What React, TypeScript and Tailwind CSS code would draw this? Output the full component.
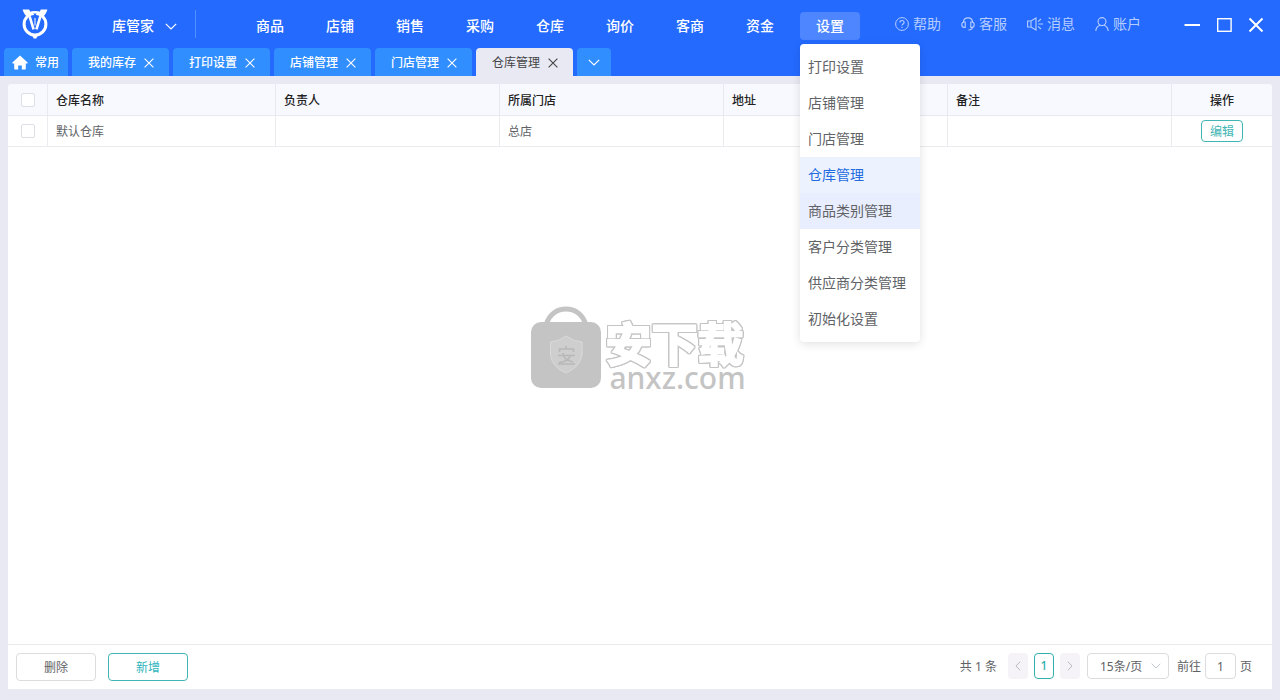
import React from "react";

const navItems = ["商品", "店铺", "销售", "采购", "仓库", "询价", "客商", "资金"];

const settingsMenu = [
  "打印设置",
  "店铺管理",
  "门店管理",
  "仓库管理",
  "商品类别管理",
  "客户分类管理",
  "供应商分类管理",
  "初始化设置",
];

const tabs = ["我的库存", "打印设置", "店铺管理", "门店管理", "仓库管理"];
const activePage = "仓库管理";
const hoveredPage = "商品类别管理";

const columns = ["仓库名称", "负责人", "所属门店", "地址", "备注"];
const rows = [["默认仓库", "", "总店", "", ""]];

function Logo() {
  return (
    <svg viewBox="0 0 26 30" className="h-[30px] w-[26px]" fill="none" stroke="#fff" aria-hidden="true">
      <circle cx="13" cy="15.2" r="10.9" strokeWidth="3" />
      <path d="M8 0L13 7L18 0Z" fill="#246aff" stroke="none" />
      <path d="M0.6 0.6H7.2L9.6 5.2L4.6 7.6C2.8 5.8 1.4 3.400 0.6 0.6Z" fill="#fff" stroke="none" />
      <path d="M25.4 0.6H18.8L16.4 5.2L21.4 7.6C23.2 5.8 24.6 3.400 25.4 0.6Z" fill="#fff" stroke="none" />
      <path d="M7 4.6Q13 2 19 4.6" strokeWidth="2.4" />
      <path d="M7.6 7.4L11.6 20.4M18.4 7.4L14.4 20.4" strokeWidth="2.6" />
      <path d="M13 9V16.500" strokeWidth="1" />
      <path d="M10 25.2H16L14.4 29.4H11.6Z" fill="#fff" stroke="none" />
    </svg>
  );
}

function Chevron({ className }: { className: string }) {
  return (
    <svg viewBox="0 0 12 7" className={className} fill="none" stroke="currentColor" strokeWidth="1.2" aria-hidden="true">
      <path d="M0.8 0.8L6 6L11.2 0.8" />
    </svg>
  );
}

function Cross() {
  return (
    <svg viewBox="0 0 10 10" className="size-[10px]" fill="none" stroke="currentColor" strokeWidth="1.1" aria-hidden="true">
      <path d="M0.6 0.6L9.4 9.4M9.4 0.6L0.6 9.4" />
    </svg>
  );
}

function HelpIcon() {
  return (
    <svg viewBox="0 0 14 14" className="size-[14px]" fill="none" stroke="currentColor" aria-hidden="true">
      <circle cx="7" cy="7" r="6.4" />
      <path d="M4.9 5.5C4.9 2.7 9.1 2.8 9.1 5.4C9.1 7 7 6.9 7 8.6M7 9.8V11" strokeWidth="1.1" />
    </svg>
  );
}

function HeadsetIcon() {
  return (
    <svg viewBox="0 0 14 14" className="size-[14px]" fill="none" stroke="currentColor" strokeWidth="1.1" aria-hidden="true">
      <path d="M2.4 5.4C2.6 -0.6 11.4 -0.6 11.6 5.4" />
      <path d="M4.2 5V10.4H3.2C0 10.4 0 5 3.2 5ZM9.8 5V10.4H10.8C14 10.4 14 5 10.8 5Z" />
      <path d="M11.6 10.4C11.2 12.4 9.800 13 7.4 13" />
    </svg>
  );
}

function SpeakerIcon() {
  return (
    <svg viewBox="0 0 16 14" className="h-[14px] w-4" fill="none" stroke="currentColor" strokeWidth="1.1" aria-hidden="true">
      <path d="M0.6 4H4L9 1V13L4 10H0.6ZM4 4V10" />
      <path d="M11 4.6L14 2M11.4 7H16M11 9.4L14 12" />
    </svg>
  );
}

function UserIcon() {
  return (
    <svg viewBox="0 0 14 14" className="size-[14px]" fill="none" stroke="currentColor" strokeWidth="1.1" aria-hidden="true">
      <circle cx="7" cy="4.6" r="4" />
      <path d="M0.8 14C1 10.6 2.6 9 5 8.2M9 8.2C11.4 9 13 10.6 13.2 14" />
    </svg>
  );
}

const utilities = [
  { label: "帮助", Icon: HelpIcon },
  { label: "客服", Icon: HeadsetIcon },
  { label: "消息", Icon: SpeakerIcon },
  { label: "账户", Icon: UserIcon },
];

function Header() {
  return (
    <header className="flex h-12 items-center pl-[22px] text-sm text-white">
      <Logo />
      <button className="ml-16 flex items-center gap-[11px] pt-1 font-medium">
        库管家
        <Chevron className="h-[7px] w-3" />
      </button>
      <span className="ml-[18px] h-7 w-px bg-[#4d90ff]" />
      <nav className="ml-11 flex gap-[10px] pt-1 font-medium">
        {navItems.map((item) => (
          <button key={item} className="h-7 w-15">
            {item}
          </button>
        ))}
        <div className="relative">
          <button className="h-7 w-15 rounded bg-[#4d86ff]" aria-expanded="true">
            设置
          </button>
          <ul className="absolute top-8 left-0 z-10 w-30 rounded bg-white py-[5px] font-normal text-[#606266] shadow-[0_2px_10px_rgba(0,0,0,0.12)]">
            {settingsMenu.map((item) => (
              <li key={item}>
                <a
                  href="#"
                  className={
                    item === activePage
                      ? "block bg-[#ecf3ff] px-2 leading-9 text-[#246ae0]"
                      : item === hoveredPage
                        ? "block bg-[#e9eeff] px-2 leading-9"
                        : "block px-2 leading-9"
                  }
                >
                  {item}
                </a>
              </li>
            ))}
          </ul>
        </div>
      </nav>
      <div className="ml-auto flex items-center gap-5 text-[#b5ceff]">
        {utilities.map(({ label, Icon }) => (
          <button key={label} className="flex items-center gap-1">
            <Icon />
            {label}
          </button>
        ))}
      </div>
      <div className="mr-4 ml-[43px] flex items-center gap-4">
        <button aria-label="最小化">
          <svg viewBox="0 0 16 16" className="size-4" stroke="#fff" strokeWidth="2">
            <path d="M0.500 9H16" />
          </svg>
        </button>
        <button aria-label="最大化">
          <svg viewBox="0 0 16 16" className="size-4" fill="none" stroke="#fff" strokeWidth="1.4">
            <rect x="1.700" y="2.700" width="13.400" height="12.600" />
          </svg>
        </button>
        <button aria-label="关闭">
          <svg viewBox="0 0 16 16" className="size-4" stroke="#fff" strokeWidth="2">
            <path d="M1.500 2.500L14.500 15.500M14.500 2.500L1.500 15.500" />
          </svg>
        </button>
      </div>
    </header>
  );
}

function TabBar() {
  return (
    <div className="flex h-7 gap-1 px-1 text-xs text-white">
      <button className="flex w-16 items-center gap-[7px] rounded-t bg-[#308eff] pt-px pl-2 font-medium">
        <svg viewBox="0 0 16 15" className="h-[15px] w-4" fill="#fff" aria-hidden="true">
          <path d="M8 0.4L15.6 7.4Q16 8.4 15 8.4H13.8V13.4Q13.8 14.6 12.6 14.6H9.8V10.4H6.2V14.6H3.4Q2.2 14.6 2.2 13.4V8.4H1Q0 8.4 0.4 7.4Z" />
        </svg>
        常用
      </button>
      {tabs.map((tab) => (
        <div
          key={tab}
          className={
            tab === activePage
              ? "flex w-[97px] items-center gap-2 rounded-t bg-[#e9e9f4] pt-px pl-4 text-[#444]"
              : "flex w-[97px] items-center gap-2 rounded-t bg-[#308eff] pt-px pl-4 font-medium"
          }
        >
          <button>{tab}</button>
          <button aria-label={"关闭" + tab}>
            <Cross />
          </button>
        </div>
      ))}
      <button className="flex w-[34px] items-center justify-center rounded-t bg-[#308eff] pt-px" aria-label="更多标签">
        <Chevron className="h-[7px] w-3" />
      </button>
    </div>
  );
}

function Tick({ label }: { label: string }) {
  return (
    <input
      type="checkbox"
      aria-label={label}
      className="mx-auto block size-[14px] appearance-none rounded-xs border border-[#dcdfe6] bg-white"
    />
  );
}

function WarehouseTable() {
  return (
    <table className="w-full table-fixed border-separate border-spacing-0 text-left text-xs text-[#606266]">
      <thead className="bg-[#f8f9ff] text-[#222]">
        <tr className="h-8">
          <th className="w-10 border-r border-b border-[#e8eaf2]">
            <Tick label="全选" />
          </th>
          {columns.map((name) => (
            <th
              key={name}
              className={
                name === "仓库名称"
                  ? "w-[228px] border-r border-b border-[#e8eaf2] px-2 pt-0.5 font-medium"
                  : "border-r border-b border-[#e8eaf2] px-2 pt-0.5 font-medium"
              }
            >
              {name}
            </th>
          ))}
          <th className="w-25 border-b border-[#e8eaf2] pt-0.5 text-center font-medium">操作</th>
        </tr>
      </thead>
      <tbody>
        {rows.map((row) => (
          <tr key={row[0]} className="h-[31px]">
            <td className="border-r border-b border-[#ebebf0]">
              <Tick label={row[0]} />
            </td>
            {row.map((cell, i) => (
              <td key={columns[i]} className="border-r border-b border-[#ebebf0] px-2 pt-0.5">
                {cell}
              </td>
            ))}
            <td className="border-b border-[#ebebf0]">
              <button className="mx-auto block h-[22px] w-[42px] rounded border border-[#41b5b3] pt-0.5 text-[#41b5b3]">
                编辑
              </button>
            </td>
          </tr>
        ))}
      </tbody>
    </table>
  );
}

function Watermark() {
  return (
    <div className="flex items-start text-[#c4c4c4]" aria-label="安下载 anxz.com">
      <svg viewBox="0 0 74 84" className="h-[84px] w-[74px]" aria-hidden="true">
        <path d="M16.500 18C22 -2 50 -2 55.500 18" fill="none" stroke="#c4c4c4" strokeWidth="5" />
        <rect x="1" y="16" width="70" height="66" rx="10" fill="#c4c4c4" />
        <path d="M36 30Q44 35.500 52 36V49Q50 61 36 67Q22 61 20.500 49V36Q29 35.500 36 30Z" fill="#cecece" stroke="#dadada" />
        <path
          d="M36 40V43M29.500 46V43H43.500V46M28 49.500H45M33 47C33 53 38 55 43 56M40 50C39 54 34 56 29 56.500M28 58H45"
          fill="none"
          stroke="#b8b8b8"
          strokeWidth="1.6"
        />
      </svg>
      <div className="flex flex-col pt-[14px] pl-px">
        <span className="text-[46px] leading-[46px] font-bold text-white [-webkit-text-stroke:2px_#fff] [filter:drop-shadow(1px_0_#c4c4c4)_drop-shadow(-1px_0_#c4c4c4)_drop-shadow(0_1px_#c4c4c4)_drop-shadow(0_-1px_#c4c4c4)]">
          安下载
        </span>
        <span className="pl-1 text-[30px] leading-6 font-medium">anxz.com</span>
      </div>
    </div>
  );
}

function Footer() {
  return (
    <footer className="flex items-start justify-between border-t border-[#e9e9ee] pt-2 pr-5 pb-2 pl-2 text-xs text-[#606266]">
      <div className="flex gap-3">
        <button className="h-7 w-20 rounded border border-[#dcdcdf] pt-0.5">删除</button>
        <button className="h-7 w-20 rounded border border-[#41b5b3] pt-0.5 text-[#2fb5bd]">新增</button>
      </div>
      <div className="flex items-center">
        <span className="pt-0.5">共 1 条</span>
        <button
          className="ml-[11px] flex h-[26px] w-5 items-center justify-center rounded bg-[#f5f3f7] text-[#b8bac0]"
          aria-label="上一页"
        >
          <Chevron className="h-[6px] w-[10px] rotate-90" />
        </button>
        <button className="ml-[6px] h-[26px] w-5 rounded border border-[#33b0ac] font-medium text-[#33b0ac]">1</button>
        <button
          className="ml-[6px] flex h-[26px] w-5 items-center justify-center rounded bg-[#f5f3f7] text-[#b8bac0]"
          aria-label="下一页"
        >
          <Chevron className="h-[6px] w-[10px] -rotate-90" />
        </button>
        <div className="relative ml-[7px] text-[#606266]">
          <select
            aria-label="每页条数"
            className="h-[26px] w-[82px] appearance-none rounded border border-[#dcdcdf] bg-white pt-0.5 pl-3"
          >
            <option>15条/页</option>
          </select>
          <Chevron className="pointer-events-none absolute top-[10px] right-2 h-[6px] w-[10px] text-[#c0c4cc]" />
        </div>
        <label htmlFor="page" className="ml-2 pt-0.5">
          前往
        </label>
        <input
          id="page"
          defaultValue="1"
          className="mx-1 h-[26px] w-[31px] rounded border border-[#dcdcdf] bg-white text-center"
        />
        <span className="pt-0.5">页</span>
      </div>
    </footer>
  );
}

export default function App() {
  return (
    <div className="flex min-h-screen flex-col bg-[#e9e9f4] font-['Noto_Sans','Noto_Sans_CJK_SC',sans-serif]">
      <div className="bg-[#246aff]">
        <Header />
        <TabBar />
      </div>
      <main className="mx-2 mt-2 mb-[11px] flex grow flex-col overflow-hidden rounded-t bg-white">
        <div className="relative flex grow flex-col">
          <WarehouseTable />
          <div className="pointer-events-none absolute inset-0 flex items-center justify-center pr-1 pb-8">
            <Watermark />
          </div>
        </div>
        <Footer />
      </main>
    </div>
  );
}
